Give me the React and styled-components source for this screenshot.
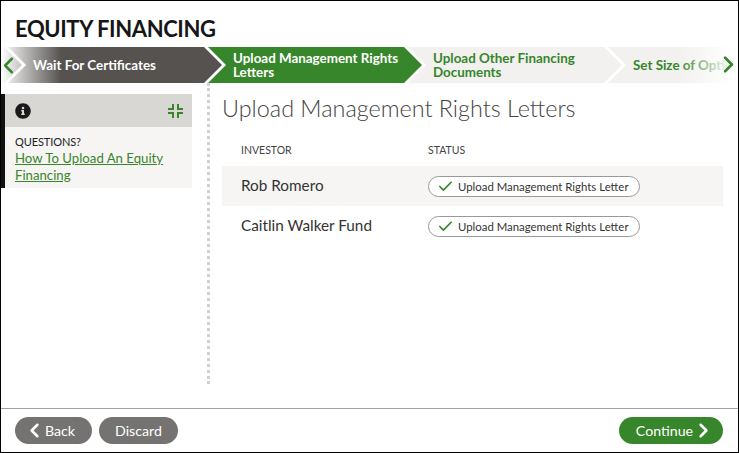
import React from "react";
import styled, { createGlobalStyle } from "styled-components";
import { FaInfoCircle } from "react-icons/fa";
import { Check, ChevronLeft, ChevronRight } from "lucide-react";

const GlobalStyle = createGlobalStyle`
  html, body {
    margin: 0;
    padding: 0;
    background: white;
  }
  * {
    box-sizing: border-box;
  }
`;

const steps = [
  { label: "", tone: "dark" },
  { label: "Wait For Certificates", tone: "dark" },
  { label: "Upload Management Rights Letters", tone: "active" },
  { label: "Upload Other Financing Documents", tone: "todo" },
  { label: "Set Size of Options", tone: "todo" },
];

const investors = ["Rob Romero", "Caitlin Walker Fund"];

const stepColors = {
  dark: { bg: "#555250", fg: "#ffffff" },
  active: { bg: "#38862b", fg: "#ffffff" },
  todo: { bg: "#f2f1ef", fg: "#38862b" },
};

function CollapseIcon() {
  return (
    <svg width="15" height="14" viewBox="0 0 15 14" fill="none" stroke="#38862b" strokeWidth="2">
      <path d="M5 0v5H0M10 0v5h5M5 14V9H0M10 14V9h5" />
    </svg>
  );
}

function App() {
  return (
    <>
      <GlobalStyle />
      <Frame>
        <Title>EQUITY FINANCING</Title>
        <Stepper>
          <Track>
            {steps.map((step, i) => (
              <Step key={i} $tone={step.tone}>
                <StepLabel>{step.label}</StepLabel>
              </Step>
            ))}
          </Track>
          <FadeLeft />
          <FadeRight />
          <ArrowLeft>
            <ChevronLeft size={27} strokeWidth={2.2} />
          </ArrowLeft>
          <ArrowRight>
            <ChevronRight size={27} strokeWidth={2.4} />
          </ArrowRight>
        </Stepper>
        <Content>
          <Sidebar>
            <HelpCard>
              <HelpHead>
                <FaInfoCircle size={16} color="#1a1a1a" />
                <CollapseIcon />
              </HelpHead>
              <HelpBody>
                <HelpLabel>QUESTIONS?</HelpLabel>
                <HelpLink href="#">How To Upload An Equity Financing</HelpLink>
              </HelpBody>
            </HelpCard>
          </Sidebar>
          <Main>
            <Heading>Upload Management Rights Letters</Heading>
            <HeaderRow>
              <HeaderCell>Investor</HeaderCell>
              <HeaderCell>Status</HeaderCell>
            </HeaderRow>
            {investors.map((name, i) => (
              <Row key={name} $shaded={i === 0}>
                <Name>{name}</Name>
                <Pill>
                  <Check size={17} color="#38862b" strokeWidth={2.4} />
                  Upload Management Rights Letter
                </Pill>
              </Row>
            ))}
          </Main>
        </Content>
        <Footer>
          <FooterGroup>
            <Button $width={77}>
              <ButtonIcon $side="left">
                <ChevronLeft size={23} strokeWidth={2.7} />
              </ButtonIcon>
              Back
            </Button>
            <Button $width={79}>Discard</Button>
          </FooterGroup>
          <Button $primary $width={104}>
            Continue
            <ButtonIcon $side="right">
              <ChevronRight size={23} strokeWidth={2.7} />
            </ButtonIcon>
          </Button>
        </Footer>
      </Frame>
    </>
  );
}

const Frame = styled.div`
  width: 739px;
  height: 453px;
  border: 1px solid #000;
  background: white;
  display: flex;
  flex-direction: column;
  overflow: hidden;
  font-family: "Lato", "Liberation Sans", sans-serif;
  color: #222;
`;

const Title = styled.h1`
  margin: 0;
  padding: 14px 0 0 14px;
  height: 46px;
  font-size: 22px;
  line-height: 28px;
  font-weight: 700;
  letter-spacing: -0.4px;
  color: #161616;
`;

const Stepper = styled.div`
  position: relative;
  height: 36px;
  flex: none;
  overflow: hidden;
`;

const Track = styled.div`
  display: flex;
  margin-left: -193px;
  height: 100%;
`;

const Step = styled.div`
  flex: none;
  width: 214px;
  height: 36px;
  margin-right: -14px;
  padding: 0 14px 0 25px;
  display: flex;
  align-items: center;
  background: ${(p) => stepColors[p.$tone].bg};
  color: ${(p) => stepColors[p.$tone].fg};
  clip-path: polygon(0 0, calc(100% - 18px) 0, 100% 50%, calc(100% - 18px) 100%, 0 100%, 18px 50%);
`;

const StepLabel = styled.span`
  font-size: 13.4px;
  line-height: 14px;
  font-weight: 700;
`;

const FadeLeft = styled.div`
  position: absolute;
  left: 0;
  top: 0;
  bottom: 0;
  width: 60px;
  background: linear-gradient(to right, #fff 0, rgba(255, 255, 255, 0) 100%);
`;

const FadeRight = styled.div`
  position: absolute;
  right: 0;
  top: 0;
  bottom: 0;
  width: 60px;
  background: linear-gradient(to left, #fff 6px, rgba(255, 255, 255, 0) 100%);
`;

const ArrowLeft = styled.span`
  position: absolute;
  left: -6px;
  top: 5px;
  color: #38862b;
  display: flex;
`;

const ArrowRight = styled.span`
  position: absolute;
  right: -4px;
  top: 4px;
  color: #38862b;
  display: flex;
`;

const Content = styled.div`
  flex: 1;
  display: flex;
  min-height: 0;
`;

const Sidebar = styled.aside`
  width: 209px;
  padding: 11px 15px 0 0;
  margin-bottom: 24px;
  border-right: 3px dotted #d0d0d0;
  flex: none;
`;

const HelpCard = styled.div`
  border-left: 4px solid #111;
  background: #f6f5f3;
`;

const HelpHead = styled.div`
  height: 33px;
  padding: 0 9px 0 10px;
  background: #d8d7d3;
  display: flex;
  align-items: center;
  justify-content: space-between;
`;

const HelpBody = styled.div`
  padding: 7px 10px 4px;
`;

const HelpLabel = styled.div`
  font-size: 11px;
  line-height: 16px;
  letter-spacing: -0.1px;
  color: #222;
`;

const HelpLink = styled.a`
  display: block;
  font-size: 13.2px;
  line-height: 17px;
  color: #38862b;
  text-decoration: underline;
`;

const Main = styled.main`
  flex: 1;
  padding: 11px 15px 0 12px;
`;

const Heading = styled.h2`
  margin: 0;
  font-size: 23.4px;
  line-height: 28px;
  font-weight: 300;
  color: #444;
`;

const HeaderRow = styled.div`
  display: grid;
  grid-template-columns: 187px 1fr;
  padding: 21px 0 9px 19px;
`;

const HeaderCell = styled.div`
  font-size: 10.5px;
  line-height: 14px;
  text-transform: uppercase;
  color: #444;
`;

const Row = styled.div`
  display: grid;
  grid-template-columns: 187px 1fr;
  align-items: center;
  height: 40px;
  padding-left: 19px;
  background: ${(p) => (p.$shaded ? "#f6f5f3" : "transparent")};
`;

const Name = styled.div`
  padding-bottom: 2px;
  font-size: 15.3px;
  color: #333;
`;

const Pill = styled.div`
  width: 212px;
  height: 21px;
  padding-left: 8px;
  display: flex;
  align-items: center;
  gap: 4px;
  border: 1px solid #999;
  border-radius: 11px;
  background: white;
  font-size: 11.4px;
  color: #333;
  white-space: nowrap;
`;

const Footer = styled.footer`
  height: 44px;
  flex: none;
  border-top: 1px solid #9aa5a5;
  padding: 8px 15px 0 14px;
  display: flex;
  justify-content: space-between;
  align-items: flex-start;
`;

const FooterGroup = styled.div`
  display: flex;
  gap: 7px;
`;

const Button = styled.button`
  width: ${(p) => p.$width}px;
  height: 27px;
  padding: 0;
  display: flex;
  align-items: center;
  justify-content: center;
  gap: 4px;
  border: none;
  border-radius: 14px;
  background: ${(p) => (p.$primary ? "#38862b" : "#757371")};
  color: white;
  font-family: inherit;
  font-size: 14.2px;
`;

const ButtonIcon = styled.span`
  display: flex;
  margin: ${(p) => (p.$side === "left" ? "0 -5px 0 -9px" : "0 -9px 0 -5px")};
`;

export default App;
